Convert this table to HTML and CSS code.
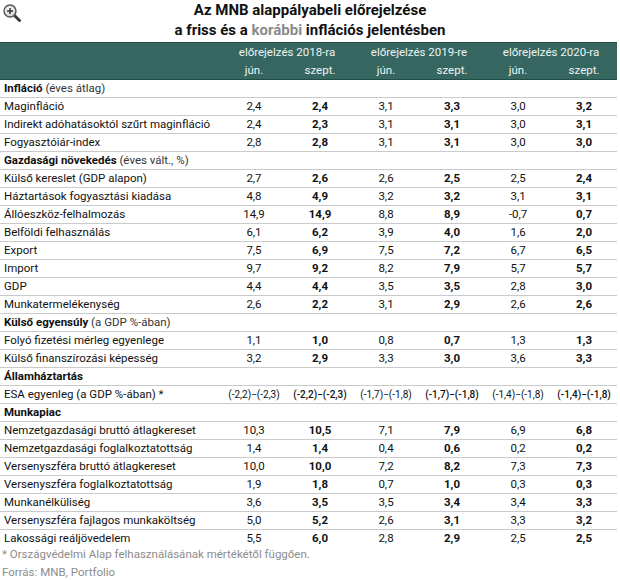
FILE: index.html
```html
<!DOCTYPE html>
<html lang="hu">
<head>
<meta charset="utf-8">
<link rel="stylesheet" href="styles.css">
</head>
<body>
<div class="page">
  <div class="zoom-icon">
    <svg width="20" height="20" viewBox="0 0 20 20">
      <defs>
        <radialGradient id="lens" cx="0.4" cy="0.35" r="0.7">
          <stop offset="0" stop-color="#ffffff"/>
          <stop offset="1" stop-color="#c9c9c9"/>
        </radialGradient>
      </defs>
      <line x1="12" y1="12" x2="17.5" y2="17.5" stroke="#3a3a3a" stroke-width="3" stroke-linecap="round"/>
      <circle cx="8" cy="8" r="6" fill="url(#lens)" stroke="#555" stroke-width="1.4"/>
      <path d="M5 8h6M8 5v6" stroke="#333" stroke-width="1.5"/>
    </svg>
  </div>
  <h1 class="title">Az MNB alappályabeli előrejelzése<br>a friss és a <span class="muted">korábbi</span> inflációs jelentésben</h1>
  <table class="data">
    <colgroup>
      <col class="c-label"><col class="c-val"><col class="c-val"><col class="c-val"><col class="c-val"><col class="c-val"><col class="c-val">
    </colgroup>
    <thead>
      <tr class="h1">
        <th></th>
        <th colspan="2">előrejelzés 2018-ra</th>
        <th colspan="2">előrejelzés 2019-re</th>
        <th colspan="2">előrejelzés 2020-ra</th>
      </tr>
      <tr class="h2">
        <th></th>
        <th>jún.</th><th>szept.</th><th>jún.</th><th>szept.</th><th>jún.</th><th>szept.</th>
      </tr>
    </thead>
    <tbody>
      <tr class="sec"><td colspan="7"><b>Infláció</b> (éves átlag)</td></tr>
      <tr><td>Maginfláció</td><td>2,4</td><td class="b">2,4</td><td>3,1</td><td class="b">3,3</td><td>3,0</td><td class="b">3,2</td></tr>
      <tr><td>Indirekt adóhatásoktól szűrt maginfláció</td><td>2,4</td><td class="b">2,3</td><td>3,1</td><td class="b">3,1</td><td>3,0</td><td class="b">3,1</td></tr>
      <tr><td>Fogyasztóiár-index</td><td>2,8</td><td class="b">2,8</td><td>3,1</td><td class="b">3,1</td><td>3,0</td><td class="b">3,0</td></tr>
      <tr class="sec"><td colspan="7"><b>Gazdasági növekedés</b> (éves vált., %)</td></tr>
      <tr><td>Külső kereslet (GDP alapon)</td><td>2,7</td><td class="b">2,6</td><td>2,6</td><td class="b">2,5</td><td>2,5</td><td class="b">2,4</td></tr>
      <tr><td>Háztartások fogyasztási kiadása</td><td>4,8</td><td class="b">4,9</td><td>3,2</td><td class="b">3,2</td><td>3,1</td><td class="b">3,1</td></tr>
      <tr><td>Állóeszköz-felhalmozás</td><td>14,9</td><td class="b">14,9</td><td>8,8</td><td class="b">8,9</td><td>-0,7</td><td class="b">0,7</td></tr>
      <tr><td>Belföldi felhasználás</td><td>6,1</td><td class="b">6,2</td><td>3,9</td><td class="b">4,0</td><td>1,6</td><td class="b">2,0</td></tr>
      <tr><td>Export</td><td>7,5</td><td class="b">6,9</td><td>7,5</td><td class="b">7,2</td><td>6,7</td><td class="b">6,5</td></tr>
      <tr><td>Import</td><td>9,7</td><td class="b">9,2</td><td>8,2</td><td class="b">7,9</td><td>5,7</td><td class="b">5,7</td></tr>
      <tr><td>GDP</td><td>4,4</td><td class="b">4,4</td><td>3,5</td><td class="b">3,5</td><td>2,8</td><td class="b">3,0</td></tr>
      <tr><td>Munkatermelékenység</td><td>2,6</td><td class="b">2,2</td><td>3,1</td><td class="b">2,9</td><td>2,6</td><td class="b">2,6</td></tr>
      <tr class="sec"><td colspan="7"><b>Külső egyensúly</b> (a GDP %-ában)</td></tr>
      <tr><td>Folyó fizetési mérleg egyenlege</td><td>1,1</td><td class="b">1,0</td><td>0,8</td><td class="b">0,7</td><td>1,3</td><td class="b">1,3</td></tr>
      <tr><td>Külső finanszírozási képesség</td><td>3,2</td><td class="b">2,9</td><td>3,3</td><td class="b">3,0</td><td>3,6</td><td class="b">3,3</td></tr>
      <tr class="sec"><td colspan="7"><b>Államháztartás</b></td></tr>
      <tr class="range"><td>ESA egyenleg (a GDP %-ában) *</td><td>(-2,2)−(-2,3)</td><td class="m">(-2,2)−(-2,3)</td><td>(-1,7)−(-1,8)</td><td class="m">(-1,7)−(-1,8)</td><td>(-1,4)−(-1,8)</td><td class="m">(-1,4)−(-1,8)</td></tr>
      <tr class="sec"><td colspan="7"><b>Munkapiac</b></td></tr>
      <tr><td>Nemzetgazdasági bruttó átlagkereset</td><td>10,3</td><td class="b">10,5</td><td>7,1</td><td class="b">7,9</td><td>6,9</td><td class="b">6,8</td></tr>
      <tr><td>Nemzetgazdasági foglalkoztatottság</td><td>1,4</td><td class="b">1,4</td><td>0,4</td><td class="b">0,6</td><td>0,2</td><td class="b">0,2</td></tr>
      <tr><td>Versenyszféra bruttó átlagkereset</td><td>10,0</td><td class="b">10,0</td><td>7,2</td><td class="b">8,2</td><td>7,3</td><td class="b">7,3</td></tr>
      <tr><td>Versenyszféra foglalkoztatottság</td><td>1,9</td><td class="b">1,8</td><td>0,7</td><td class="b">1,0</td><td>0,3</td><td class="b">0,3</td></tr>
      <tr><td>Munkanélküliség</td><td>3,6</td><td class="b">3,5</td><td>3,5</td><td class="b">3,4</td><td>3,4</td><td class="b">3,3</td></tr>
      <tr><td>Versenyszféra fajlagos munkaköltség</td><td>5,0</td><td class="b">5,2</td><td>2,6</td><td class="b">3,1</td><td>3,3</td><td class="b">3,2</td></tr>
      <tr class="last"><td>Lakossági reáljövedelem</td><td>5,5</td><td class="b">6,0</td><td>2,8</td><td class="b">2,9</td><td>2,5</td><td class="b">2,5</td></tr>
    </tbody>
  </table>
  <p class="note">* Országvédelmi Alap felhasználásának mértékétől függően.</p>
  <p class="note">Forrás: MNB, Portfolio</p>
</div>
</body>
</html>
```
FILE: styles.css
```css
html, body {
  margin: 0;
  padding: 0;
  background: #ffffff;
}
body {
  font-family: Roboto, "Liberation Sans", Arial, sans-serif;
  color: #111111;
}
.page {
  position: relative;
  width: 620px;
}
.zoom-icon {
  position: absolute;
  left: 2px;
  top: 3px;
  width: 20px;
  height: 20px;
}
.title {
  margin: 0 0 2px 0;
  font-size: 15px;
  line-height: 20px;
  font-weight: 700;
  text-align: center;
  color: #111111;
}
.muted {
  color: #8a8a8a;
}
.data {
  border-collapse: collapse;
  table-layout: fixed;
  width: 617px;
  font-size: 11.5px;
}
.c-label { width: 221px; }
.c-val { width: 66px; }
.data thead tr {
  background: #356760;
  color: #eef4f2;
}
.data thead th {
  font-weight: 400;
  height: 18px;
  padding: 0;
  line-height: 18px;
  text-align: center;
  font-size: 11.5px;
}
.data thead tr.h1 th {
  border-top: 1px solid #1f4c46;
}
.data thead tr.h2 th {
  border-bottom: 1px solid #1f4c46;
}
.data td {
  height: 17px;
  padding: 0;
  line-height: 17px;
  border-bottom: 1px solid #cacaca;
  text-align: center;
  white-space: nowrap;
}
.data td:first-child {
  text-align: left;
  padding-left: 4px;
}
.data tr.sec td {
  color: #333333;
}
.data tr.sec b {
  color: #111111;
  font-weight: 700;
}
.data td.b {
  font-weight: 700;
}
.data td.m {
  font-weight: 500;
}
.data tr.range td {
  font-size: 10px;
}
.data tr.range td:first-child {
  font-size: 11.5px;
}
.data tr.last td {
  border-bottom: none;
}
.note {
  margin: 0;
  padding-left: 2px;
  font-size: 11.5px;
  line-height: 18px;
  color: #8c8c8c;
}
.note:first-of-type {
  margin-top: -2px;
}
```
